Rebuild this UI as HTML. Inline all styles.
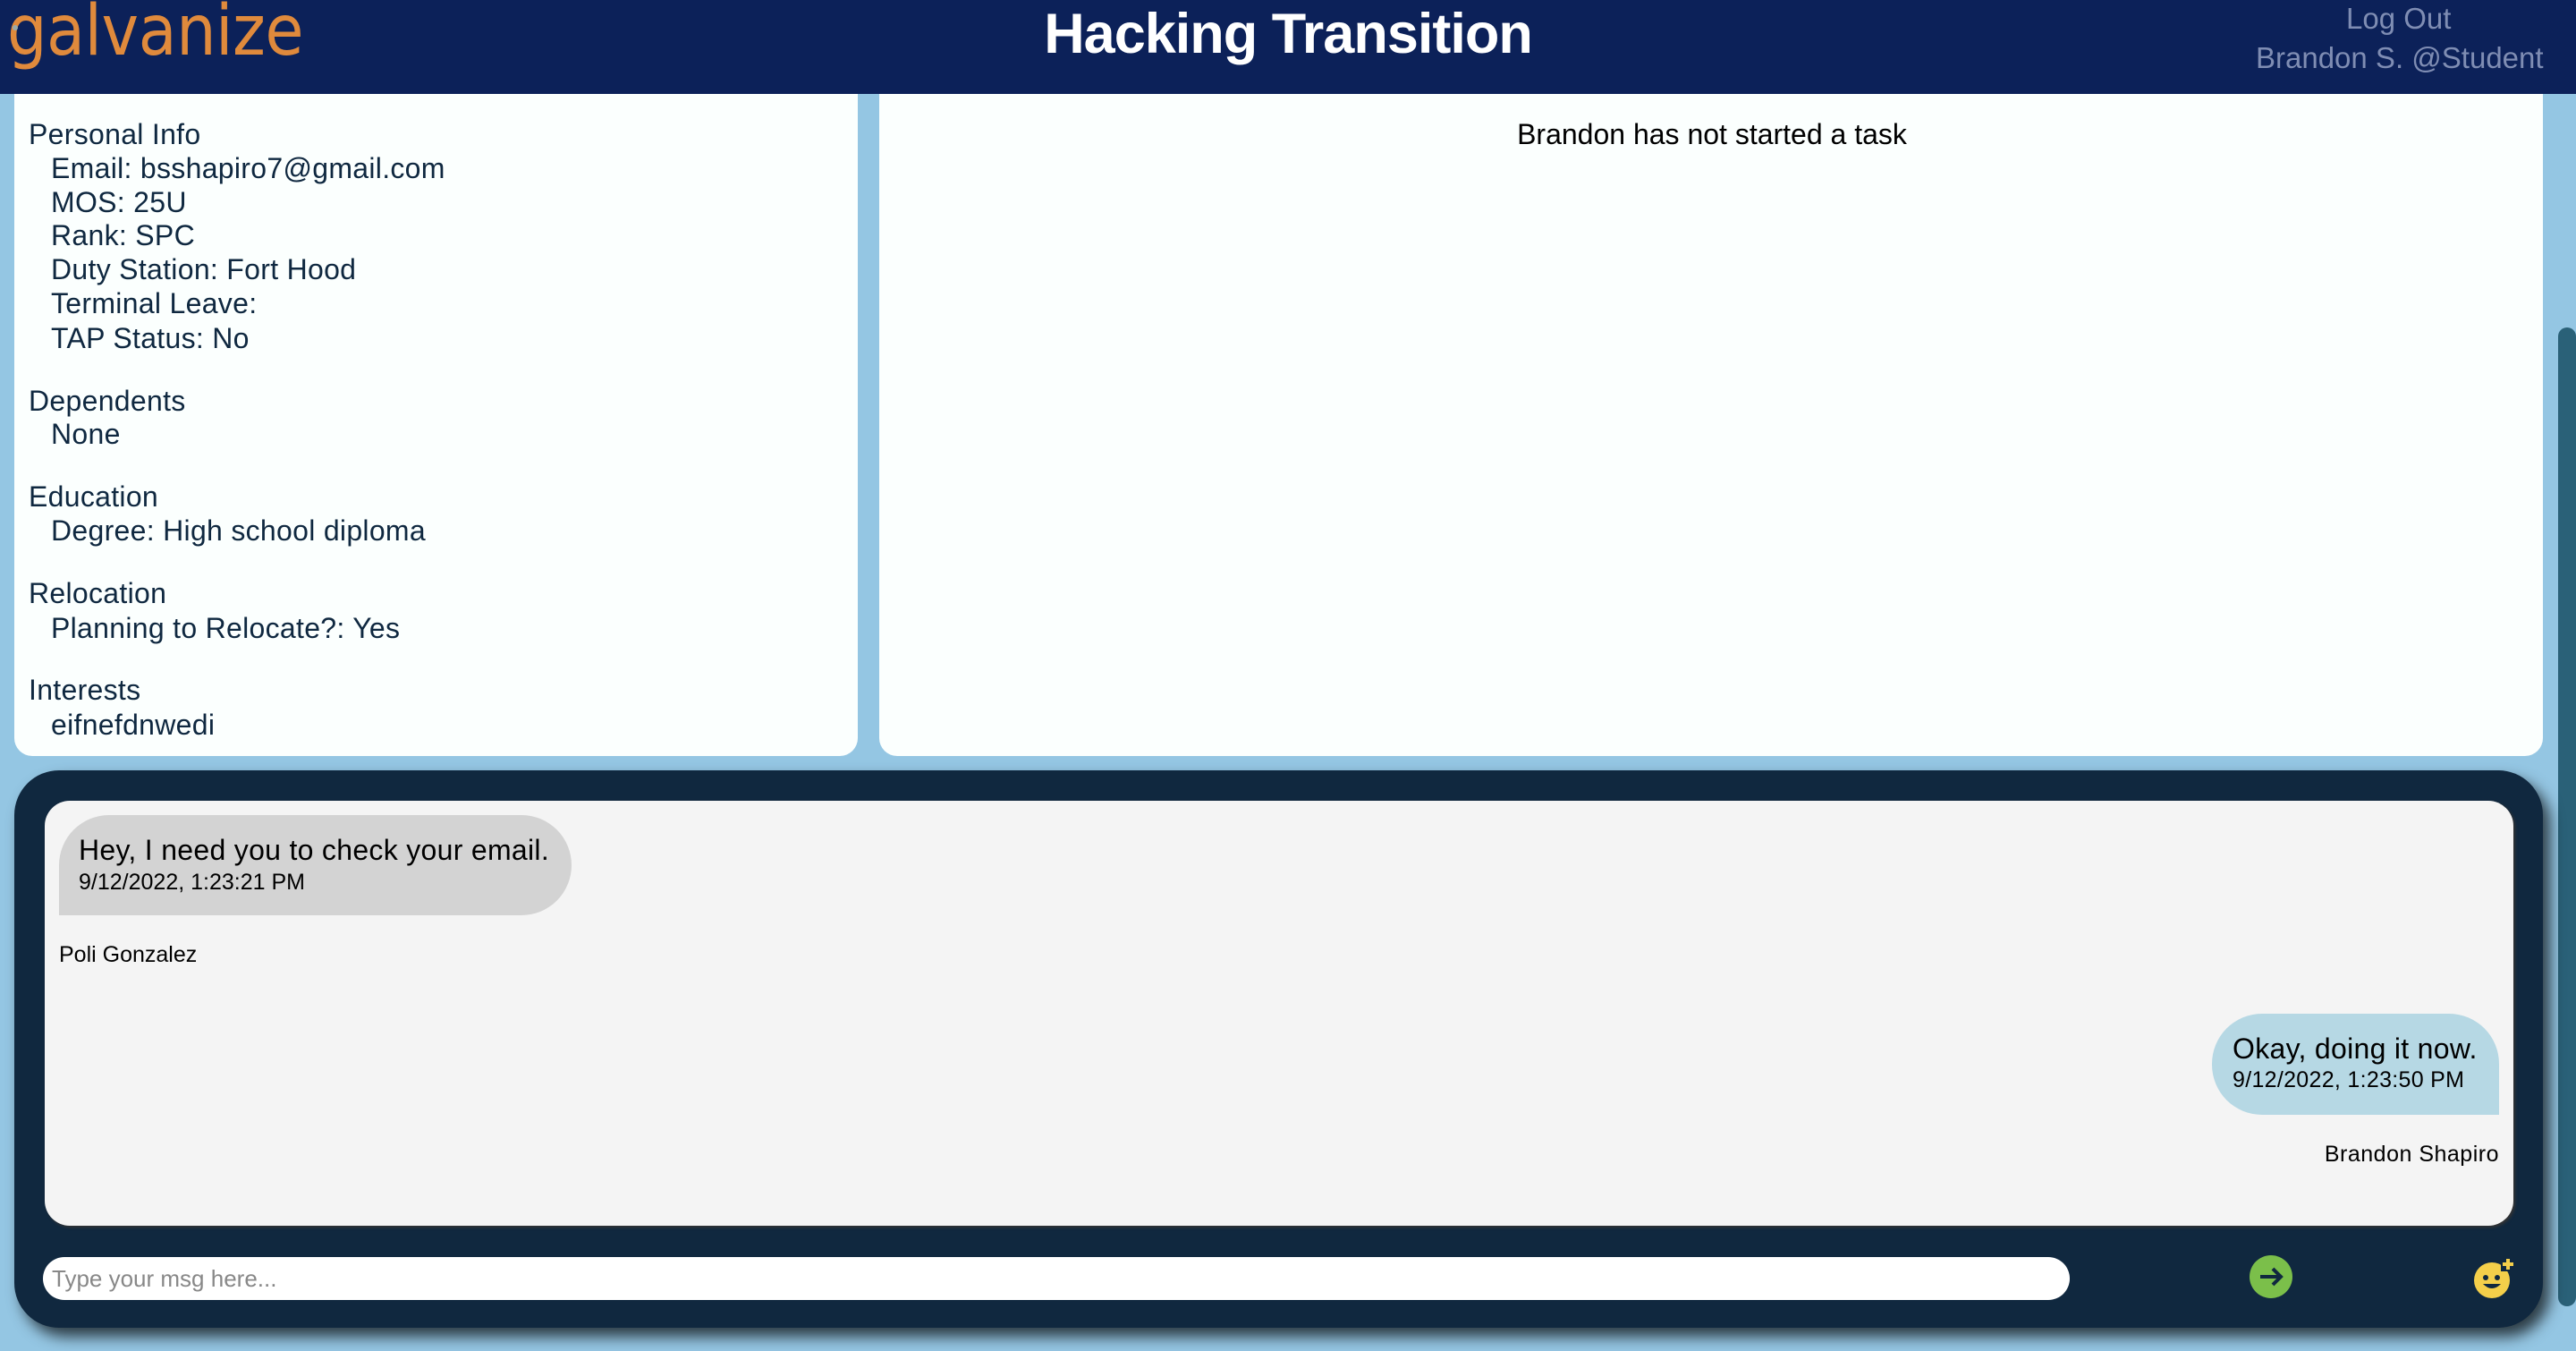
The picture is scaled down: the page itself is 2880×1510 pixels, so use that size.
<!DOCTYPE html>
<html><head><meta charset="utf-8"><style>
*{margin:0;padding:0;box-sizing:border-box}
body{width:2880px;height:1510px;overflow:hidden;background:#94c6e3;font-family:"Liberation Sans",sans-serif;position:relative;color:#0f2840}
.a{position:absolute;white-space:nowrap}
#hdr{left:0;top:0;width:2880px;height:105px;background:#0c2159}
.l{font-size:32px;line-height:38px;letter-spacing:0.3px}
</style></head><body>
<div class="a" id="hdr"></div>
<div class="a" style="left:8px;top:-10px;font-size:78px;color:#e08a3c;letter-spacing:-0.5px;font-family:'DejaVu Sans Condensed','Liberation Sans',sans-serif;">galvanize</div>
<div class="a" style="left:14px;top:28px;width:6px;height:6px;border-radius:50%;background:#9aa;"></div>
<div class="a" style="left:1440px;top:2px;transform:translateX(-50%);font-size:63px;font-weight:bold;color:#fff;letter-spacing:-1px;">Hacking Transition</div>
<div class="a" style="left:2623px;top:2px;font-size:33px;color:#7f8db3;">Log Out</div>
<div class="a" style="left:2522px;top:46px;font-size:33px;color:#7f8db3;">Brandon S. @Student</div>

<div class="a" style="left:16px;top:105px;width:943px;height:740px;background:#fbfffe;border-radius:0 0 20px 20px;"></div>
<div class="a" style="left:983px;top:105px;width:1860px;height:740px;background:#fbfffe;border-radius:0 0 20px 20px;"></div>
<div class="a" style="left:1914px;top:132px;transform:translateX(-50%);font-size:32px;color:#000;">Brandon has not started a task</div>

<div class="a l" style="left:32px;top:131px;">Personal Info</div>
<div class="a l" style="left:57px;top:169px;">Email: bsshapiro7@gmail.com</div>
<div class="a l" style="left:57px;top:207px;">MOS: 25U</div>
<div class="a l" style="left:57px;top:244px;">Rank: SPC</div>
<div class="a l" style="left:57px;top:282px;">Duty Station: Fort Hood</div>
<div class="a l" style="left:57px;top:320px;">Terminal Leave:</div>
<div class="a l" style="left:57px;top:359px;">TAP Status: No</div>
<div class="a l" style="left:32px;top:429px;">Dependents</div>
<div class="a l" style="left:57px;top:466px;">None</div>
<div class="a l" style="left:32px;top:536px;">Education</div>
<div class="a l" style="left:57px;top:574px;">Degree: High school diploma</div>
<div class="a l" style="left:32px;top:644px;">Relocation</div>
<div class="a l" style="left:57px;top:683px;">Planning to Relocate?: Yes</div>
<div class="a l" style="left:32px;top:752px;">Interests</div>
<div class="a l" style="left:57px;top:791px;">eifnefdnwedi</div>

<div class="a" style="left:2844px;top:105px;width:36px;height:1405px;background:#94c6e3;"></div>
<div class="a" style="left:2860px;top:366px;width:20px;height:1094px;background:#2a6178;border-radius:10px;"></div>

<div class="a" style="left:16px;top:861px;width:2827px;height:623px;background:#10283f;border-radius:50px;box-shadow:8px 10px 16px rgba(0,0,0,0.7);"></div>
<div class="a" style="left:50px;top:895px;width:2760px;height:475px;background:#f4f4f4;border-radius:28px;box-shadow:2px 2px 3px #333;"></div>

<div class="a" style="left:66px;top:911px;width:573px;height:112px;background:#d3d3d3;border-radius:56px 56px 56px 0;"></div>
<div class="a" style="left:88px;top:932px;font-size:32px;color:#000;letter-spacing:0.3px;">Hey, I need you to check your email.</div>
<div class="a" style="left:88px;top:972px;font-size:25px;color:#000;">9/12/2022, 1:23:21 PM</div>
<div class="a" style="left:66px;top:1053px;font-size:25px;color:#000;">Poli Gonzalez</div>

<div class="a" style="left:2473px;top:1133px;width:321px;height:113px;background:#b6d8e4;border-radius:56px 56px 0 56px;"></div>
<div class="a" style="left:2496px;top:1154px;font-size:32px;color:#000;letter-spacing:0.3px;">Okay, doing it now.</div>
<div class="a" style="left:2496px;top:1193px;font-size:25px;color:#000;letter-spacing:0.3px;">9/12/2022, 1:23:50 PM</div>
<div class="a" style="right:86px;top:1276px;font-size:25px;color:#000;letter-spacing:0.5px;">Brandon Shapiro</div>

<div class="a" style="left:48px;top:1405px;width:2266px;height:48px;background:#fff;border-radius:24px;"></div>
<div class="a" style="left:58px;top:1414px;font-size:26px;color:#888;">Type your msg here...</div>

<svg class="a" style="left:2515px;top:1403px" width="48" height="48" viewBox="0 0 48 48"><circle cx="24" cy="24" r="24" fill="#7bbf4a"/><path d="M12 24H34M26 15L35 24L26 33" stroke="#10283f" stroke-width="4" fill="none"/></svg>
<svg class="a" style="left:2766px;top:1405px" width="48" height="46" viewBox="0 0 48 46"><circle cx="20" cy="26" r="20" fill="#f4cf4a"/><circle cx="13" cy="23" r="3" fill="#10283f"/><circle cx="26" cy="23" r="3" fill="#10283f"/><path d="M10 30Q20 40 30 30Z" fill="#10283f"/><rect x="30" y="0" width="16" height="16" fill="#10283f"/><path d="M38 2V14M32 8H44" stroke="#f4cf4a" stroke-width="4"/></svg>
</body></html>
